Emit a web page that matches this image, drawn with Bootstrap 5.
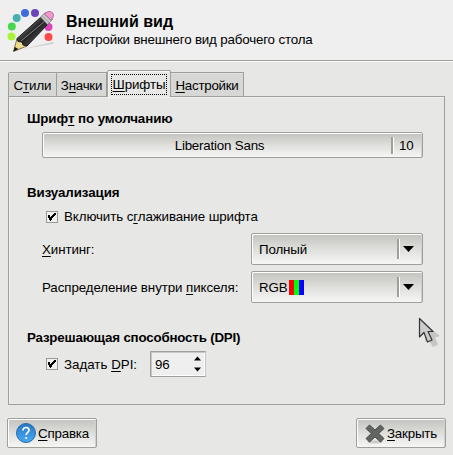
<!DOCTYPE html>
<html lang="ru">
<head>
<meta charset="utf-8">
<meta name="viewport" content="width=device-width, initial-scale=1">
<title>Внешний вид</title>
<link href="https://cdn.jsdelivr.net/npm/bootstrap@5.3.0/dist/css/bootstrap.min.css" rel="stylesheet">
<style>
html,body{height:455px;overflow:hidden}
body{background:#e7e7e5;color:#000;font:13.333px/16px "Liberation Sans",Arial,sans-serif}
u{text-decoration-thickness:1px;text-underline-offset:2px;text-decoration-skip-ink:none}
.dialog-head{height:62px;background:#efefef;border-bottom:1px solid #fff;box-shadow:inset 0 -1px #a0a09b;padding:0 0 0 6px;gap:6px}
.dialog-head h1{font-size:16px;line-height:19px;font-weight:700;margin:0}
.dialog-head .titles{padding-top:12px}
.sub{letter-spacing:-.165px;padding-top:1px}
.sheet{padding:8px 8px 0}
.nav-tabs.tabs{--bs-nav-tabs-border-width:0;height:26px;border:0;flex-wrap:nowrap;align-items:flex-end}
.tabs .nav-link{height:24px;margin:0;padding:5px 0 0;border:1px solid #a0a09b;border-left-width:0;border-bottom:0;border-radius:0;background:#d7d7d5;color:#000;text-align:center;box-shadow:inset 0 1px #e2e2e0;line-height:16px;letter-spacing:-.25px}
.tabs .nav-link.first{border-left-width:1px;border-top-left-radius:2px;letter-spacing:-.1px}
.tabs .nav-link.active{height:27px;margin-bottom:-1px;background:#e7e7e5;color:#000;border:1px solid #a0a09b;border-bottom:0;border-radius:2px 2px 0 0;padding:3px 3px 0;z-index:1;position:relative;box-shadow:inset 1px 1px #f7f7f6;letter-spacing:-.1px}
.tabs .focus{display:block;border:1px dotted #000;height:21px;line-height:19px}
.w1{width:49px}.w2{width:50px}.w3{width:64px}.w4{width:73px}
.pane{height:309px;border:1px solid #a0a09b;box-shadow:inset 1px 1px #f0f0ee;padding:14px 21px 0 18px}
.pane h2{font-size:13.333px;line-height:16px;font-weight:700;margin:0;letter-spacing:-.08px}
.indent{padding-left:15px}
.face{background:linear-gradient(#c2c2be,#dededb 50%,#f6f6f5);border:1px solid #a0a09b;border-radius:2px;box-shadow:inset 1px 1px #fff,inset -1px 0 #d0d0cd;color:#000;padding:0;font-size:13.333px;line-height:16px}
.font-face{height:26px;margin-top:5px;width:381px}
.font-name{padding:2px 0 0 5px;letter-spacing:-.2px}
.vline{width:3px;background:#a0a09b;border-right:1px solid #fff;flex:none}
.font-face .vline{height:17px}
.size{width:28px;padding:2px 0 0 5px;text-align:left;letter-spacing:-.2px}
.box{width:12px;height:12px;margin:0 6px 0 4px;border:1px solid #9a9a96;background:#f0f0f0;flex:none}
.box svg{display:block}
.combo{width:172px;height:32px;padding-left:7px}
.combo .vline{height:20px;margin-left:auto}
.combo .arrow{width:22px;padding-left:3px}
.combo-text{letter-spacing:-.15px;padding-top:2px}
.rgb{width:15px;height:15px;background:linear-gradient(90deg,#f00 5px,#0f0 5px 10px,#00f 10px);margin-left:2px}
.spin{width:56px;height:26px;margin-left:13px;border:1px solid #a0a09b;border-right-color:#c4c4c0;border-radius:1px;background:#efefef;box-shadow:inset 1px 1px #c8c8c5,inset -1px -1px #fff;padding:0 4px}
.spin span,.dpi-text{padding-top:2px}
.spin span{letter-spacing:-.2px}
.footer-bar{padding:13px 7px 0}
.footer-bar .btn{width:90px;height:30px;letter-spacing:-.2px}
.footer-bar .btn span{padding-top:2px}
.help,.close-btn{padding-left:8px}
.check-text,.row-text{letter-spacing:-.09px}
.row-text{padding-top:2px}
.cursor{position:absolute;left:416px;top:315px}
.pane .g1{margin-top:27px}.g2{margin-top:8px}.g3{margin-top:8px}.g4{margin-top:6px}.pane .g5{margin-top:27px;letter-spacing:-.19px}.g6{margin-top:5px}
</style>
</head>
<body>
<header class="dialog-head d-flex">
<svg width="54" height="60" viewBox="0 0 54 60" class="flex-shrink-0">
<defs><linearGradient id="bar" x1="0" y1="0" x2="1" y2="1"><stop offset=".3" stop-color="#606060"/><stop offset=".5" stop-color="#222"/><stop offset=".7" stop-color="#444"/></linearGradient></defs>
<path d="M8 51 47 42q2 1-1 2L17 49z" fill="#bbb" opacity=".65"/>
<circle cx="5.500" cy="36.500" r="4" fill="#a9f43b"/><circle cx="5.800" cy="26.500" r="4" fill="#45d84a"/><circle cx="10.700" cy="18" r="4" fill="#48b0b0"/><circle cx="19" cy="13" r="4" fill="#416cdc"/><circle cx="29" cy="13" r="4" fill="#6c46b8"/><circle cx="42.500" cy="27" r="4" fill="#dd44b8"/><circle cx="42.500" cy="37" r="4" fill="#ff4848"/>
<path d="m7.500 51.500 3.500-13 10 7.500z" fill="#eddc8b" stroke="#65592d" stroke-width=".8"/><path d="m7.500 51.500 1.300-4.500 3.500 2z" fill="#111"/>
<path d="M11 38.500 35 17l7 7-21 22-4-1-1-3-4-.5z" fill="url(#bar)" stroke="#111" stroke-width=".9"/><path d="m15 41 24-20" stroke="#888" stroke-width="1"/>
<path d="m34.500 17 5-4.500 7 7-5 5z" fill="#ccc" stroke="#777" stroke-width=".8"/><path d="m36.500 16 7 7m-5-9 7 7" stroke="#888" stroke-width=".8"/>
<path d="M38.500 14q3-3.500 6-2.500 3 1 3 4-.5 3-2.500 4.500z" fill="#f09aca" stroke="#b5609a" stroke-width=".9"/>
</svg>
<div class="titles"><h1>Внешний вид</h1><div class="sub">Настройки внешнего вид рабочего стола</div></div>
</header>
<main>
<div class="sheet">
<nav class="nav nav-tabs tabs">
<a class="nav-link first w1">С<u>т</u>или</a><a class="nav-link w2">З<u>н</u>ачки</a><a class="nav-link active w3"><span class="focus"><u>Ш</u>рифты</span></a><a class="nav-link w4"><u>Н</u>астройки</a>
</nav>
<section class="pane">
<h2>Шриф<u>т</u> по умолчанию</h2>
<div class="indent"><button class="btn face font-face d-flex align-items-center"><span class="font-name flex-grow-1 text-center">Liberation Sans</span><span class="vline"></span><span class="size">10</span></button></div>
<h2 class="g1">Визуализация</h2>
<div class="indent">
<label class="d-flex align-items-center g2"><span class="box"><svg width="10" height="10" viewBox="0 0 10 10"><path d="M1 3h2v2h1V4h1V3h1V2h1V1h2v2H8v1H7v1H6v1H5v2H4v1H3V8H2V6H1z"/></svg></span><span class="check-text">Включить с<u>г</u>лаживание шрифта</span></label>
<div class="d-flex align-items-center justify-content-between g3"><label class="row-text"><u>Х</u>интинг:</label><button class="btn face combo d-flex align-items-center"><span class="combo-text">Полный</span><span class="vline"></span><span class="arrow d-flex"><svg width="11" height="6" viewBox="0 0 11 6"><path d="M0 0h11L5.500 6z"/></svg></span></button></div>
<div class="d-flex align-items-center justify-content-between g4"><label class="row-text">Распределение внутри <u>п</u>икселя:</label><button class="btn face combo d-flex align-items-center"><span class="combo-text">RGB</span><span class="rgb"></span><span class="vline"></span><span class="arrow d-flex"><svg width="11" height="6" viewBox="0 0 11 6"><path d="M0 0h11L5.500 6z"/></svg></span></button></div>
</div>
<h2 class="g5">Разрешающая способность (DPI)</h2>
<div class="indent d-flex align-items-center g6"><span class="box"><svg width="10" height="10" viewBox="0 0 10 10"><path d="M1 3h2v2h1V4h1V3h1V2h1V1h2v2H8v1H7v1H6v1H5v2H4v1H3V8H2V6H1z"/></svg></span><span class="dpi-text">Задать <u>D</u>PI:</span><div class="spin d-flex align-items-center justify-content-between"><span>96</span><svg width="7" height="16" viewBox="0 0 7 16"><path d="M0 4.500h7L3.500.5zM0 11.500h7l-3.500 4z"/></svg></div></div>
</section>
</div>
<footer class="footer-bar d-flex justify-content-between">
<button class="btn face help d-flex align-items-center"><svg width="22" height="22" viewBox="0 0 22 22"><defs><linearGradient id="blue" x2="0" y2="1"><stop stop-color="#2778c4"/><stop offset="1" stop-color="#4aaaf4"/></linearGradient></defs><circle cx="10" cy="11" r="9.500" fill="url(#blue)" stroke="#276aac"/><path d="M7 8.500q0-3 3-3t3 2.700c0 2.200-2.800 2.300-2.800 4.800M10.200 15v2" fill="none" stroke="#fff" stroke-width="1.700"/></svg><span><u>С</u>правка</span></button>
<button class="btn face close-btn d-flex align-items-center"><svg width="22" height="22" viewBox="0 0 22 22"><ellipse cx="10" cy="20" rx="8" ry="1.500" fill="#aaa" opacity=".5"/><path d="m4.500 3 5.500 5L15.500 3 19 6.500 13.700 11.500 19 16.500 15.500 20 10 15 4.500 20 1 16.500 6.300 11.500 1 6.500z" fill="#636563" stroke="#494b49" stroke-linejoin="round"/></svg><span><u>З</u>акрыть</span></button>
</footer>
</main>
<svg class="cursor" width="26" height="34" viewBox="0 0 26 34"><path d="m9 9 15 12-5 1.500 3 7-5 2.500-5-8-3 3z" fill="#aaa" opacity=".55"/><path d="M3.500 3.500v18.500l4.500-4.500 3.500 9.500 4.500-2-4-8.500h5z" fill="#ccc" stroke="#333" stroke-width="1.200" stroke-linejoin="round"/></svg>
<script src="https://cdn.jsdelivr.net/npm/bootstrap@5.3.0/dist/js/bootstrap.bundle.min.js"></script>
</body>
</html>
